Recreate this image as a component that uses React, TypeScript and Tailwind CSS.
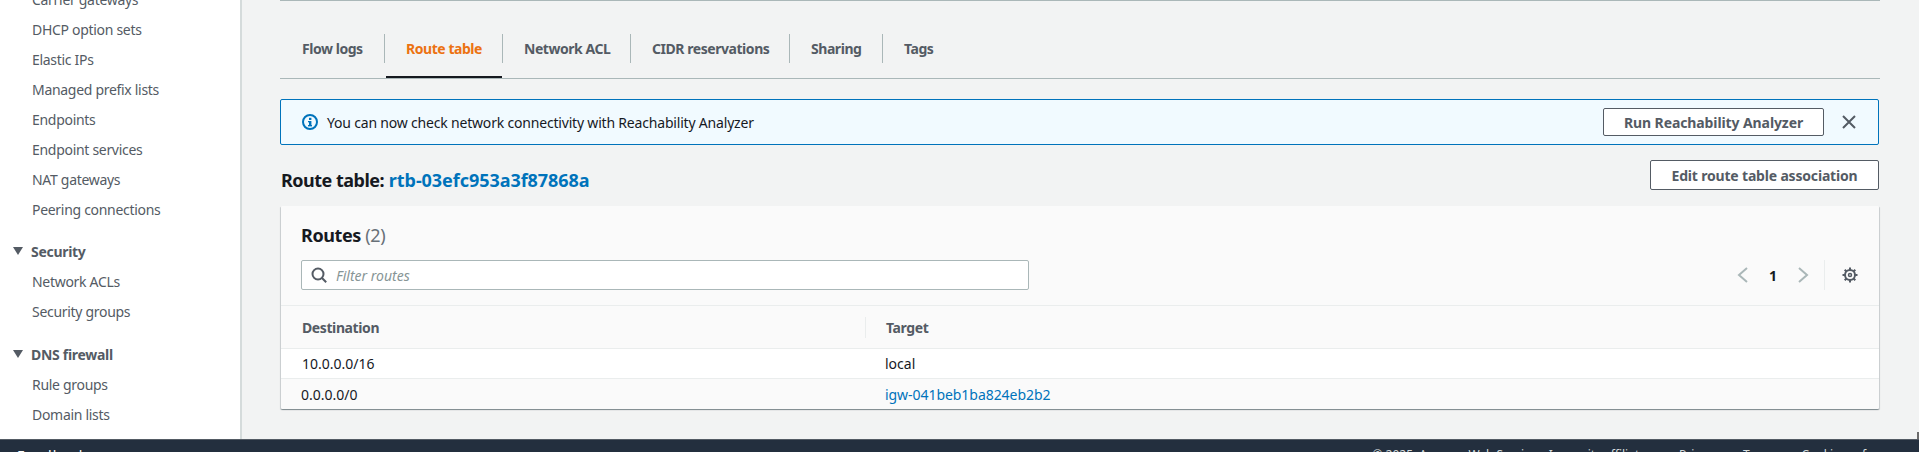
import React from "react";

const InfoIcon = () => (
  <svg width="16" height="16" viewBox="0 0 16 16" fill="none" className="shrink-0">
    <circle cx="8" cy="8" r="7" stroke="#0073bb" strokeWidth="2" />
    <rect x="7" y="7" width="2.4" height="5" fill="#0073bb" />
    <rect x="6" y="11" width="4" height="1.4" fill="#0073bb" />
    <rect x="6" y="7" width="2" height="1.3" fill="#0073bb" />
    <rect x="7" y="3.8" width="2.4" height="2.2" fill="#0073bb" />
  </svg>
);

const CloseIcon = () => (
  <svg width="16" height="16" viewBox="0 0 16 16" fill="none">
    <path d="M2 2l12 12M14 2L2 14" stroke="#545b64" strokeWidth="2" />
  </svg>
);

const SearchIcon = () => (
  <svg width="16" height="16" viewBox="0 0 16 16" fill="none">
    <circle cx="7" cy="7" r="5.5" stroke="#545b64" strokeWidth="2" />
    <path d="M11 11l4.200 4.200" stroke="#545b64" strokeWidth="2" />
  </svg>
);

const Chevron = ({ right }: { right?: boolean }) => (
  <svg width="16" height="16" viewBox="0 0 16 16" fill="none">
    <path d={right ? "M4 1l8 7-8 7" : "M12 1L4 8l8 7"} stroke="#aab7b8" strokeWidth="2" />
  </svg>
);

const GearIcon = () => (
  <svg width="16" height="16" viewBox="0 0 16 16" fill="none">
    <circle cx="8" cy="8" r="5" stroke="#545b64" strokeWidth="2" />
    <path
      d="M8 .5v2.500M8 13v2.500M.5 8H3M13 8h2.500M2.700 2.700l1.800 1.800M11.500 11.500l1.800 1.800M13.300 2.700l-1.800 1.800M4.500 11.500l-1.800 1.800"
      stroke="#545b64"
      strokeWidth="2"
    />
    <circle cx="8" cy="8" r="1.500" stroke="#545b64" strokeWidth="1.500" />
  </svg>
);

const NavItem = ({ label }: { label: string }) => (
  <div className="h-[30px] pl-[32px] leading-[30px] tracking-[-0.3px] whitespace-nowrap text-[#545b64]">
    {label}
  </div>
);

const NavSection = ({ label }: { label: string }) => (
  <div className="mb-[1px] flex h-[30px] items-center gap-[8px] pl-[13px] font-bold tracking-[-0.3px] text-[#545b64]">
    <span className="h-0 w-0 border-x-[5px] border-t-[8px] border-x-transparent border-t-[#545b64]" />
    {label}
  </div>
);

const tabs = [
  { label: "Flow logs", width: "w-[105px] pl-[22px]" },
  { label: "Route table", width: "w-[118px] pl-[21px]", active: true },
  { label: "Network ACL", width: "w-[128px] pl-[21px]" },
  { label: "CIDR reservations", width: "w-[159px] pl-[21px]" },
  { label: "Sharing", width: "w-[93px] pl-[21px]" },
  { label: "Tags", width: "w-[80px] pl-[21px]", last: true },
];

const App = () => {
  return (
    <div className="relative flex h-[452px] w-[1919px] flex-col overflow-hidden font-['Noto_Sans',sans-serif] text-[14px] text-[#16191f]">
      <div className="flex h-[439px] shrink-0">
        <aside className="w-[242px] shrink-0 overflow-hidden border-r-2 border-[#d5dbdb] bg-white">
          <div className="-mt-[15px]">
            <NavItem label="Carrier gateways" />
            <NavItem label="DHCP option sets" />
            <NavItem label="Elastic IPs" />
            <NavItem label="Managed prefix lists" />
            <NavItem label="Endpoints" />
            <NavItem label="Endpoint services" />
            <NavItem label="NAT gateways" />
            <NavItem label="Peering connections" />
            <div className="mt-[11px]">
              <NavSection label="Security" />
              <NavItem label="Network ACLs" />
              <NavItem label="Security groups" />
            </div>
            <div className="mt-[12px]">
              <NavSection label="DNS firewall" />
              <NavItem label="Rule groups" />
              <NavItem label="Domain lists" />
            </div>
          </div>
        </aside>

        <main className="min-w-0 flex-1 bg-[#f2f3f3] pl-[38px] pr-[39px]">
          <div className="border-t border-[#aab7b8] pt-[33px]">
            <div className="flex h-[45px] items-start border-b border-[#aab7b8]">
              {tabs.map((tab) => (
                <div
                  key={tab.label}
                  className={`relative flex h-[29px] items-center font-bold tracking-[-0.45px] ${tab.width} ${
                    tab.last ? "" : "border-r border-[#aab7b8]"
                  } ${tab.active ? "text-[#ec7211]" : "text-[#545b64]"}`}
                >
                  {tab.label}
                  {tab.active && (
                    <span className="absolute -bottom-[15px] left-[1px] right-0 h-[2px] bg-[#16191f]" />
                  )}
                </div>
              ))}
            </div>
          </div>

          <div className="mt-[20px] mr-[1px] flex h-[46px] items-center rounded-[2px] border border-[#0073bb] bg-[#f1faff] pl-[21px] pr-[21px]">
            <InfoIcon />
            <span className="ml-[9px] flex-1 tracking-[-0.19px]">
              You can now check network connectivity with Reachability Analyzer
            </span>
            <button className="h-[28px] w-[221px] rounded-[2px] border border-[#545b64] bg-white font-bold tracking-[-0.1px] text-[#545b64]">
              Run Reachability Analyzer
            </button>
            <span className="ml-[17px] flex">
              <CloseIcon />
            </span>
          </div>

          <div className="mt-[15px] mr-[1px] flex h-[30px] items-center justify-between pl-[1px]">
            <h2 className="mt-[10px] text-[18px] font-bold">
              <span className="tracking-[-0.5px]">Route table:</span>{" "}
              <a className="tracking-[-0.05px] text-[#0073bb]">rtb-03efc953a3f87868a</a>
            </h2>
            <button className="h-[30px] w-[229px] rounded-[2px] border border-[#545b64] bg-white font-bold tracking-[-0.18px] text-[#545b64]">
              Edit route table association
            </button>
          </div>

          <section className="mt-[16px] mr-[1px] ml-[1px] h-[203px] rounded-[1px] bg-[#fafafa] shadow-[0_1px_1px_0_rgba(0,28,36,0.3),1px_1px_1px_0_rgba(0,28,36,0.15),-1px_1px_1px_0_rgba(0,28,36,0.15)]">
            <div className="h-[100px] border-b border-[#eaeded] px-[20px] pt-[17px]">
              <h3 className="text-[18px] leading-[24px] font-bold tracking-[-0.4px]">
                Routes <span className="font-normal text-[#687078]">(2)</span>
              </h3>
              <div className="mt-[13px] flex items-center justify-between">
                <div className="flex h-[30px] w-[728px] items-center rounded-[2px] border border-[#aab7b8] bg-white pl-[9px]">
                  <SearchIcon />
                  <span className="ml-[9px] text-[#879596] italic">Filter routes</span>
                </div>
                <div className="flex h-[30px] items-center">
                  <Chevron />
                  <span className="w-[44px] text-center font-bold">1</span>
                  <Chevron right />
                  <span className="ml-[13px] h-[30px] border-l border-[#eaeded]" />
                  <span className="ml-[17px] mr-[1px] flex">
                    <GearIcon />
                  </span>
                </div>
              </div>
            </div>
            <div className="grid h-[43px] grid-cols-[584px_1fr] items-center border-b border-[#eaeded] font-bold tracking-[-0.4px] text-[#545b64]">
              <div className="pl-[21px]">Destination</div>
              <div className="flex h-[21px] items-center border-l border-[#eaeded] pl-[20px]">Target</div>
            </div>
            <div className="grid h-[30px] grid-cols-[584px_1fr] items-center border-b border-[#eaeded] bg-white">
              <div className="pl-[21px]">10.0.0.0/16</div>
              <div className="pl-[20px]">local</div>
            </div>
            <div className="grid h-[30px] grid-cols-[584px_1fr] items-center">
              <div className="pl-[20px]">0.0.0.0/0</div>
              <div className="pl-[20px]">
                <a className="tracking-[-0.05px] text-[#0073bb]">igw-041beb1ba824eb2b2</a>
              </div>
            </div>
          </section>
        </main>
      </div>

      <footer className="flex h-[13px] shrink-0 items-start justify-between overflow-hidden border-t border-[#545b64] bg-[#232f3e] pr-[9px] pl-[17px] leading-[20px] text-[#d5dbdb]">
        <div className="mt-[6px] text-[14px] tracking-[1px] text-white">
          <span>Feedback</span>
        </div>
        <div className="mt-[5px] flex gap-[24px] text-[12px]">
          <span>© 2025, Amazon Web Services, Inc. or its affiliates.</span>
          <span>Privacy</span>
          <span>Terms</span>
          <span>Cookie preferences</span>
        </div>
      </footer>

      <span className="absolute top-[432px] right-0 h-[7px] w-[2px] bg-[#6b6b6b]" />
    </div>
  );
};

export default App;
